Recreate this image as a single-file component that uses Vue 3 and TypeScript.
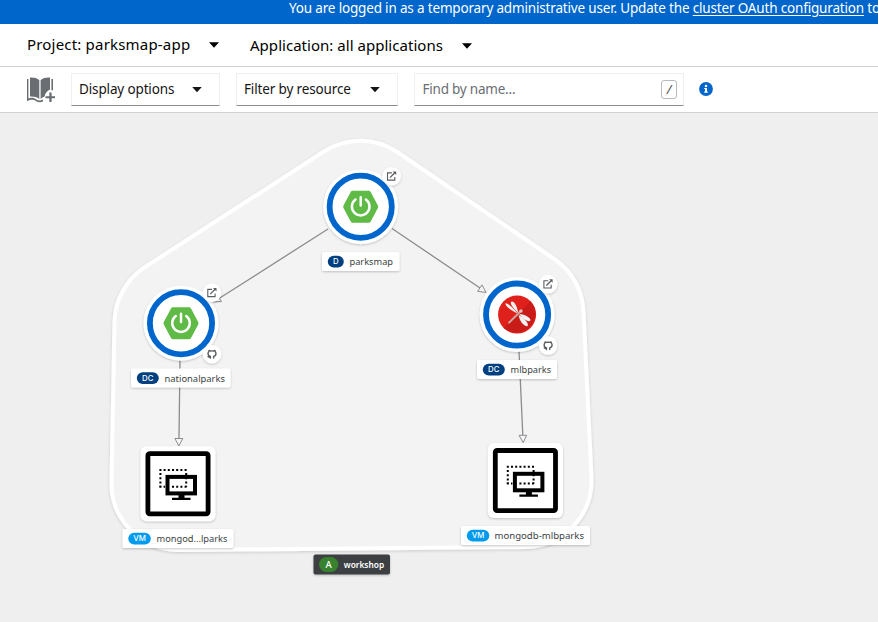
<script setup lang="ts">
interface Workload {
  x: number
  y: number
  name: string
  badge: string
  icon: 'spring' | 'dragonfly'
  repo: boolean
  label: { x: number; y: number; w: number; badgeW: number; textX: number; textW: number }
}

interface Machine {
  x: number
  y: number
  name: string
  label: { x: number; y: number; w: number; textX: number; textW: number }
}

const workloads: Workload[] = [
  { x: 360.7, y: 206.7, name: 'parksmap', badge: 'D', icon: 'spring', repo: false, label: { x: 322, y: 252, w: 77.5, badgeW: 16, textX: 349.5, textW: 43.5 } },
  { x: 181, y: 323.2, name: 'nationalparks', badge: 'DC', icon: 'spring', repo: true, label: { x: 131, y: 368.5, w: 99.5, badgeW: 22, textX: 164.5, textW: 60.5 } },
  { x: 517.1, y: 314.6, name: 'mlbparks', badge: 'DC', icon: 'dragonfly', repo: true, label: { x: 477, y: 360, w: 80, badgeW: 22, textX: 510.5, textW: 40.7 } },
]

const machines: Machine[] = [
  { x: 178, y: 483.7, name: 'mongod...lparks', label: { x: 122.5, y: 529, w: 111, textX: 156.5, textW: 71 } },
  { x: 525.4, y: 480.6, name: 'mongodb-mlbparks', label: { x: 461, y: 526, w: 129, textX: 494.5, textW: 89.5 } },
]
</script>

<template>
  <div class="page">
    <div class="banner">
      <span class="banner-text">You are logged in as a temporary administrative user. Update the <a>cluster OAuth configuration</a> to</span>
    </div>
    <header class="context">
      <button class="context-item project"><span>Project: parksmap-app</span><i class="caret"></i></button>
      <button class="context-item application"><span>Application: all applications</span><i class="caret"></i></button>
    </header>
    <div class="toolbar">
      <svg class="catalog" width="30" height="28" viewBox="0 0 30 28">
        <g fill="#6a6e73">
          <path d="M4 1.5C8 1.3 11 2 13.3 4V23C10.5 21 7.5 20.3 4 20.6Z" />
          <path d="M14.6 4C17 2 20 1.3 24 1.5V13.5C21 15 19 17.5 18.6 20.5C17.2 21 15.7 22 14.6 23Z" />
          <path d="M1 3H2.4V22.5C5 21.2 8 21.700 10.500 23.500C12.500 25 14.500 24.800 17 23.500V25.500C14.500 26.600 12 26.400 10 25C7 23.200 5 23.500 1 25.200Z" />
          <path d="M25.400 3H27V14.200H25.400Z" />
          <path d="M23.300 16.500H25.600V20.200H29V22.200H25.600V26H23.300V22.200H19.500V20.200H23.300Z" />
        </g>
      </svg>
      <button class="select display"><span>Display options</span><i class="caret"></i></button>
      <button class="select filter"><span>Filter by resource</span><i class="caret"></i></button>
      <div class="search"><span>Find by name...</span><kbd>/</kbd></div>
      <svg class="info" width="14" height="14" viewBox="0 0 14 14">
        <circle cx="7" cy="7" r="6.9" fill="#06c" />
        <circle cx="7" cy="3.9" r="1.25" fill="#fff" />
        <path d="M5.200 5.900H8V9.500H8.800V10.700H5.200V9.500H6V7.100H5.200Z" fill="#fff" />
      </svg>
    </div>
    <main class="canvas">
      <svg class="topology" width="878" height="509" viewBox="0 113 878 509">
        <defs>
          <filter id="lift" x="-20%" y="-20%" width="140%" height="150%">
            <feDropShadow dx="0" dy="1" stdDeviation="1.2" flood-color="#030303" flood-opacity="0.22" />
          </filter>
          <filter id="soft" x="-5%" y="-5%" width="110%" height="110%">
            <feDropShadow dx="0" dy="1" stdDeviation="1.5" flood-color="#030303" flood-opacity="0.16" />
          </filter>
          <g id="external" fill="none" stroke="#5b5e61" stroke-width="1.1">
            <path d="M0.300 -3.200H-4V4H3.300V0.800" />
            <path d="M-1.500 1.500L3.300 -3.300" stroke-width="1.300" />
            <path d="M1.200 -4.700H4.700V-1.200Z" fill="#5b5e61" stroke="none" />
          </g>
          <path id="github" fill="none" stroke="#5b5e61" stroke-width="1.35" stroke-linecap="round" stroke-linejoin="round" d="M-1.600 3.900V2.200C-3.500 1.700 -4.200 0.200 -3.900 -1.300C-3.800 -1.800 -3.500 -2.200 -3.200 -2.500L-3 -3.700L-1.500 -3.200Q0 -3.500 1.500 -3.200L3 -3.700L3.200 -2.500C3.500 -2.200 3.800 -1.800 3.900 -1.300C4.200 0.200 3.500 1.700 1.600 2.200V3.900M-1.900 3.300C-3 3.500 -3.100 2.400 -3.900 2.300" />
          <g id="spring">
            <path d="M-8 -16H8Q9.300 -16 10 -14.800L17.200 -1.300Q17.900 0 17.200 1.300L10 14.800Q9.300 16 8 16H-8Q-9.300 16 -10 14.800L-17.200 1.300Q-17.900 0 -17.200 -1.300L-10 -14.800Q-9.300 -16 -8 -16Z" fill="#5fbb46" />
            <path d="M-5.200 -7.200A8.800 8.800 0 1 0 5.200 -7.200M0 -9.400V-1.200" fill="none" stroke="#fff" stroke-width="2.500" stroke-linecap="round" />
          </g>
          <g id="dragonfly">
            <circle r="19" fill="#e0201a" />
            <path d="M13.400 -13.400A19 19 0 0 1 -13.400 13.400Z" fill="#c91b18" />
            <g fill="#f3f2f2">
              <path d="M0.700 -1C-5 -3.500 -11 -7.500 -11.800 -10.800C-11.500 -13 -6 -9 0.700 -1Z" />
              <path d="M1 -1.500C-4 -7 -8 -11 -5.500 -13C-2.500 -13.500 0.500 -7 1 -1.500Z" />
              <path d="M1.500 0.500C2.500 7 7 12 10.200 11.600C12.500 10 8 4 1.500 0.500Z" />
              <path d="M2 -0.500C8 0 14 3.500 13.300 5.800C12 8 6 5.500 2 -0.500Z" />
            </g>
            <path d="M4.300 -4.200L-8 8" stroke="#c9aaa6" stroke-width="2" stroke-linecap="round" />
            <circle cx="3.800" cy="-3.500" r="1.700" fill="#d8c4c0" />
          </g>
          <g id="machine">
            <rect x="-37.500" y="-37.500" width="75" height="75" rx="6" fill="#fff" filter="url(#lift)" />
            <rect x="-30.100" y="-30.100" width="60.200" height="60.200" rx="1.800" fill="#fff" stroke="#000" stroke-width="4.800" />
            <rect x="-10.500" y="-6.800" width="27.500" height="16.500" fill="#fff" stroke="#000" stroke-width="4" />
            <path d="M0.500 11H6.500V14H12.500V16.200H-6V14H0.500Z" />
            <path d="M-18.600 -13.800H9.200M-18.600 3H-13M-6 3H9.200" fill="none" stroke="#000" stroke-width="2" stroke-dasharray="2 2.200" />
            <path d="M-17.600 -10.600V3M8.200 -10.600V3" fill="none" stroke="#000" stroke-width="2" stroke-dasharray="2 2.200" />
          </g>
        </defs>

        <path class="group" filter="url(#soft)" d="M324.200 151.300A66.500 66.500 0 0 1 397.400 152L554.400 259A66.500 66.500 0 0 1 583.500 311L591.500 478A66.500 66.500 0 0 1 525.600 547L178.600 550A66.500 66.500 0 0 1 111.500 482.700L114.500 321.700A66.500 66.500 0 0 1 144.800 267.200Z" />

        <g class="edges">
          <path d="M328 229L219 298.500M392 228.500L480 288M180 360L179 438M519 351L522.800 435" />
          <g class="tips">
            <path d="M213.500 302L217.500 295.500L221.500 301.500Z" />
            <path d="M486 292.500L477.600 291.300L482 284.900Z" />
            <path d="M178.800 446L174.900 438.500H182.800Z" />
            <path d="M523.200 442.600L519 435.300H526.700Z" />
          </g>
        </g>

        <g v-for="node in workloads" :key="node.name">
          <g :transform="`translate(${node.x} ${node.y})`">
            <circle r="37.500" fill="#fff" filter="url(#lift)" />
            <circle r="31.100" fill="#fff" stroke="#06c" stroke-width="5.800" />
            <use :href="`#${node.icon}`" />
            <circle cx="31" cy="-30.500" r="9.300" fill="#fff" filter="url(#lift)" />
            <use href="#external" x="30.800" y="-30.600" />
            <template v-if="node.repo">
              <circle cx="31" cy="31" r="9.300" fill="#fff" filter="url(#lift)" />
              <use href="#github" x="31" y="31" />
            </template>
          </g>
          <rect :x="node.label.x" :y="node.label.y" :width="node.label.w" height="19" rx="2" fill="#fff" filter="url(#lift)" />
          <rect :x="node.label.x + 5.8" :y="node.label.y + 3.7" :width="node.label.badgeW" height="11.8" rx="5.9" fill="#004080" />
          <text class="badge" :x="node.label.x + 5.8 + node.label.badgeW / 2" :y="node.label.y + 12.4">{{ node.badge }}</text>
          <text class="name" :x="node.label.textX" :y="node.label.y + 13.2" :textLength="node.label.textW" lengthAdjust="spacingAndGlyphs">{{ node.name }}</text>
        </g>

        <g v-for="vm in machines" :key="vm.name">
          <use href="#machine" :x="vm.x" :y="vm.y" />
          <rect :x="vm.label.x" :y="vm.label.y" :width="vm.label.w" height="19" rx="2" fill="#fff" filter="url(#lift)" />
          <rect :x="vm.label.x + 5.8" :y="vm.label.y + 3.7" width="22.5" height="11.8" rx="5.9" fill="#009aee" />
          <text class="badge" :x="vm.label.x + 17" :y="vm.label.y + 12.4">VM</text>
          <text class="name" :x="vm.label.textX" :y="vm.label.y + 13.2" :textLength="vm.label.textW" lengthAdjust="spacingAndGlyphs">{{ vm.name }}</text>
        </g>

        <rect x="313.500" y="554.500" width="76.500" height="20" rx="2" fill="#3c3f42" filter="url(#lift)" />
        <rect x="319" y="557" width="19.300" height="15" rx="7.500" fill="#38812f" />
        <text class="group-badge" x="328.600" y="568">A</text>
        <text class="group-name" x="343.800" y="568.200" textLength="40.300" lengthAdjust="spacingAndGlyphs">workshop</text>
      </svg>
    </main>
  </div>
</template>

<style>
body {
  margin: 0;
  overflow: hidden;
}
</style>

<style scoped>
.page {
  width: 878px;
  height: 622px;
  display: flex;
  flex-direction: column;
  overflow: hidden;
  background: #efefef;
  font-family: "Noto Sans", "Open Sans", sans-serif;
  color: #151515;
}
.banner {
  height: 24px;
  flex: none;
  overflow: hidden;
  background: #06c;
  color: #fff;
  font-size: 13.5px;
  line-height: 16px;
  white-space: nowrap;
  padding-left: 289px;
  box-sizing: border-box;
}
.banner-text {
  letter-spacing: -0.17px;
}
.banner a {
  text-decoration: underline;
  text-underline-offset: 2px;
}
.context {
  height: 42px;
  flex: none;
  display: flex;
  background: #fff;
  border-bottom: 1px solid #d2d2d2;
}
button {
  font: inherit;
  color: inherit;
  background: #fff;
  border: 0;
  padding: 0;
  box-sizing: border-box;
  display: flex;
  align-items: center;
  justify-content: space-between;
  white-space: nowrap;
}
.context-item {
  font-size: 15px;
  height: 42px;
  color: #000;
}
.context-item span {
  padding-bottom: 2px;
}
.project {
  width: 192px;
  margin-left: 27px;
  letter-spacing: 0.19px;
}
.application {
  width: 222px;
  margin-left: 31px;
  padding-top: 2px;
  letter-spacing: 0.03px;
}
.caret {
  width: 10px;
  height: 5.5px;
  background: currentColor;
  clip-path: polygon(0 0, 100% 0, 50% 100%);
}
.toolbar {
  height: 45px;
  flex: none;
  display: flex;
  align-items: center;
  background: #fff;
  border-bottom: 1px solid #d2d2d2;
  font-size: 13.5px;
  letter-spacing: -0.14px;
}
.catalog {
  margin-left: 26px;
}
.select,
.search {
  height: 33px;
  border: 1px solid #f0f0f0;
  border-bottom-color: #8a8d90;
  box-sizing: border-box;
}
.select {
  padding: 0 17px 0 7px;
  letter-spacing: -0.14px;
}
.select span,
.search span {
  padding-bottom: 2px;
}
.display {
  width: 149px;
  margin-left: 15px;
}
.filter {
  width: 162px;
  margin-left: 16px;
}
.search {
  width: 270px;
  margin-left: 16px;
  padding: 0 6px 0 7.5px;
  display: flex;
  align-items: center;
  justify-content: space-between;
  color: #6a6e73;
  letter-spacing: -0.22px;
}
kbd {
  width: 16px;
  height: 19px;
  box-sizing: border-box;
  border: 1px solid #b8bbbe;
  border-radius: 3px;
  margin-bottom: 1px;
  color: #4f5255;
  font: italic 13px/17px "Noto Sans", sans-serif;
  text-align: center;
}
.info {
  margin-left: 15px;
  margin-bottom: 1px;
}
.canvas {
  flex: 1;
}
.topology {
  display: block;
}
.group {
  fill: #f3f3f3;
  stroke: #fff;
  stroke-width: 4;
}
.edges {
  fill: none;
  stroke: #8a8d90;
  stroke-width: 1.3;
}
.tips {
  fill: #f5f5f5;
  stroke-width: 1;
}
.name {
  font-size: 9.7px;
  fill: #3c3f42;
}
.badge {
  font-family: Inter, "Noto Sans", sans-serif;
  font-size: 7.8px;
  font-weight: 500;
  fill: #fff;
  text-anchor: middle;
}
.group-badge {
  font-size: 9.5px;
  font-weight: 500;
  fill: #fff;
  text-anchor: middle;
}
.group-name {
  font-size: 9.7px;
  font-weight: 600;
  fill: #fff;
}
</style>
